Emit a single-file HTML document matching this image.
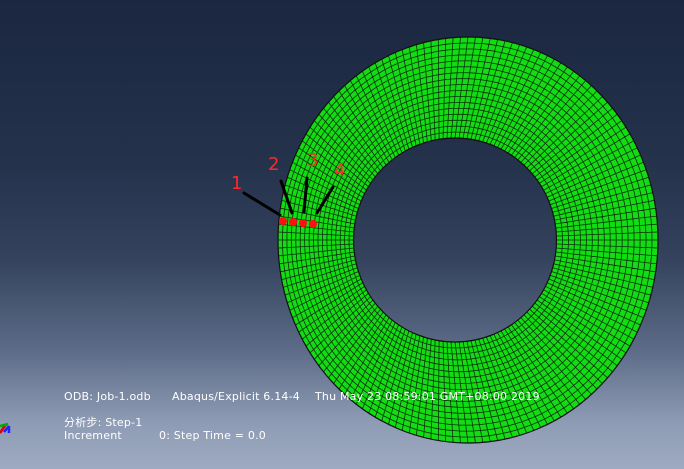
<!DOCTYPE html>
<html><head><meta charset="utf-8"><style>
html,body{margin:0;padding:0}
body{width:684px;height:469px;overflow:hidden;position:relative;
background:linear-gradient(to bottom,#1b2741 0%,#25324c 35%,#34425d 55%,#5d6c88 75%,#8e9bb4 90%,#9eabc2 100%);
font-family:"DejaVu Sans","Noto Sans CJK SC",sans-serif;}
.t{position:absolute;color:#fff;font-size:11px;white-space:pre;line-height:13px;letter-spacing:0.2px}
.l{position:absolute;color:#ff2828;font-family:"DejaVu Sans",sans-serif;font-size:18px;line-height:18px}
</style></head><body>
<svg id="s" width="684" height="469" style="position:absolute;left:0;top:0"></svg>
<div class="t" style="left:64px;top:390px">ODB: Job-1.odb</div>
<div class="t" style="left:172px;top:390px">Abaqus/Explicit 6.14-4</div>
<div class="t" style="left:315px;top:390px">Thu May 23 08:59:01 GMT+08:00 2019</div>
<div class="t" style="left:64px;top:416px">分析步: Step-1</div>
<div class="t" style="left:64px;top:429px">Increment</div>
<div class="t" style="left:159px;top:429px">0: Step Time = 0.0</div>
<div class="l" style="left:231px;top:175px">1</div>
<div class="l" style="left:268px;top:156px">2</div>
<div class="l" style="left:307px;top:152px">3</div>
<div class="l" style="left:334px;top:162px">4</div>
<script>
(function(){
var s=document.getElementById('s');
var ocx=468,ocy=240,orx=190,ory=203,icx=455,icy=240,irx=101.5,iry=102;
var N=160,R=17,h='';
function pt(a,f){var x1=icx+irx*Math.cos(a),y1=icy+iry*Math.sin(a),x2=ocx+orx*Math.cos(a),y2=ocy+ory*Math.sin(a);return [x1+(x2-x1)*f,y1+(y2-y1)*f];}
var d='M'+(ocx+orx)+' '+ocy+' A'+orx+' '+ory+' 0 1 0 '+(ocx-orx)+' '+ocy+' A'+orx+' '+ory+' 0 1 0 '+(ocx+orx)+' '+ocy+' Z M'+(icx+irx)+' '+icy+' A'+irx+' '+iry+' 0 1 1 '+(icx-irx)+' '+icy+' A'+irx+' '+iry+' 0 1 1 '+(icx+irx)+' '+icy+' Z';
h+='<path d="'+d+'" fill="#14dc14" fill-rule="evenodd"/>';
var p='';
for(var i=0;i<N;i++){var a=i/N*2*Math.PI,A=pt(a,0),B=pt(a,1);p+='M'+A[0].toFixed(1)+' '+A[1].toFixed(1)+'L'+B[0].toFixed(1)+' '+B[1].toFixed(1);}
for(var j=1;j<R;j++){var f=j/R;for(var i=0;i<=N;i++){var q=pt(i/N*2*Math.PI,f);p+=(i?'L':'M')+q[0].toFixed(1)+' '+q[1].toFixed(1);}}
h+='<path d="'+p+'" stroke="#083008" stroke-width="0.8" fill="none"/>';
h+='<path d="'+d+'" fill="none" stroke="#111" stroke-width="1.2"/>';
h+='<g stroke="#000" stroke-width="3" stroke-linecap="round"><line x1="244" y1="193" x2="280" y2="215"/><line x1="281" y1="181" x2="292" y2="213"/><line x1="307" y1="178" x2="304" y2="212"/><line x1="333" y1="187" x2="317" y2="213"/></g>';
h+='<g fill="#ff1010"><circle cx="283" cy="221" r="4"/><circle cx="293" cy="222" r="4"/><circle cx="303" cy="223" r="4"/><circle cx="313" cy="224" r="4"/></g>';
h+='<g stroke-width="2.5"><line x1="0" y1="433" x2="6" y2="424" stroke="#d00"/><line x1="0" y1="426" x2="8" y2="424" stroke="#0a0"/><line x1="4" y1="432" x2="9" y2="426" stroke="#22f"/><line x1="9" y1="426" x2="9" y2="433" stroke="#22f"/></g>';
s.innerHTML=h;
})();
</script>
</body></html>
